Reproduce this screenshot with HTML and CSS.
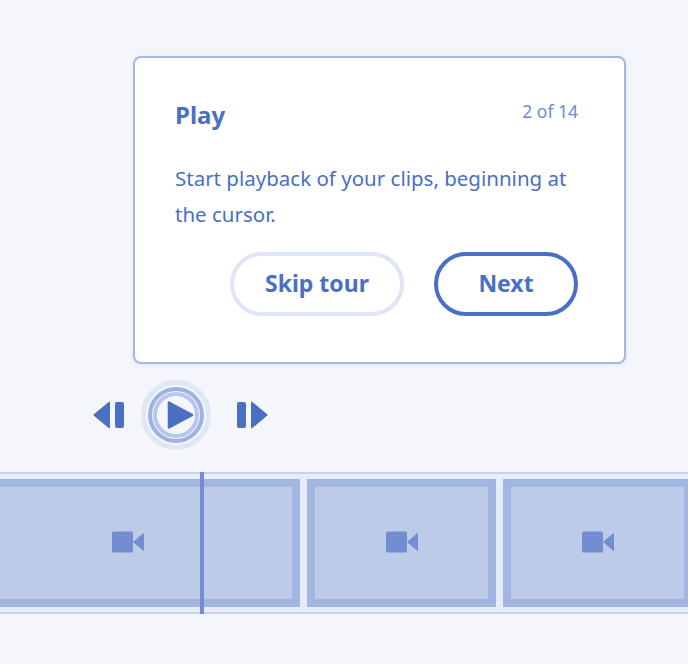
FILE: index.html
```html
<!DOCTYPE html>
<html lang="en">
<head>
    <meta charset="UTF-8">
    <title>Play tour</title>
    <link rel="stylesheet" href="styles.css">
</head>
<body>

    <div class="tour-card">
        <div class="tour-head">
            <h2>Play</h2>
            <span class="tour-count">2 of 14</span>
        </div>
        <p>Start playback of your clips, beginning at the cursor.</p>
        <div class="tour-actions">
            <button class="btn btn-skip">Skip tour</button>
            <button class="btn btn-next">Next</button>
        </div>
    </div>

    <div class="controls">
        <svg class="ctrl-step" width="31" height="28" viewBox="0 0 31 28">
            <path d="M17 1.500v25a.8.8 0 0 1-1.300.6L.6 14.600a.8.8 0 0 1 0-1.200L15.700.9a.8.8 0 0 1 1.300.6z"/>
            <rect x="22" y="1" width="9" height="26" rx="2"/>
        </svg>
        <svg class="ctrl-play" width="70" height="70" viewBox="0 0 70 70">
            <circle class="ring-outer" cx="35" cy="35" r="32.500"/>
            <circle class="ring-mid" cx="35" cy="35" r="26"/>
            <circle class="ring-inner" cx="35" cy="35" r="21"/>
            <path class="play-arrow" d="M26.700 22.500a1.200 1.200 0 0 1 1.800-1L51.800 34a1.200 1.200 0 0 1 0 2L28.500 48.500a1.200 1.200 0 0 1-1.800-1z"/>
        </svg>
        <svg class="ctrl-step" width="31" height="28" viewBox="0 0 31 28">
            <rect x="0" y="1" width="9" height="26" rx="2"/>
            <path d="M14 1.500v25a.8.8 0 0 0 1.300.6l15.100-12.500a.8.8 0 0 0 0-1.200L15.300.9a.8.8 0 0 0-1.300.6z"/>
        </svg>
    </div>

    <div class="timeline">
        <div class="clip clip-first">
            <svg class="clip-icon" width="32" height="22" viewBox="0 0 32 22"><rect width="21" height="21" y=".5" rx="1.500"/><path d="M21 11L31.200 2.200a.5.5 0 0 1 .8.400v16.800a.5.5 0 0 1-.8.400z"/></svg>
        </div>
        <div class="clip clip-mid">
            <svg class="clip-icon" width="32" height="22" viewBox="0 0 32 22"><rect width="21" height="21" y=".5" rx="1.500"/><path d="M21 11L31.200 2.200a.5.5 0 0 1 .8.400v16.800a.5.5 0 0 1-.8.400z"/></svg>
        </div>
        <div class="clip clip-last">
            <svg class="clip-icon" width="32" height="22" viewBox="0 0 32 22"><rect width="21" height="21" y=".5" rx="1.500"/><path d="M21 11L31.200 2.200a.5.5 0 0 1 .8.400v16.800a.5.5 0 0 1-.8.400z"/></svg>
        </div>
        <div class="playhead"></div>
    </div>

</body>
</html>
```

FILE: styles.css
```css
:root {
    --bg: #f4f6fc;
    --text: #4a6fc3;
    --muted: #6d8bd0;
    --line: #a5b8e4;
    --pale: #dfe6f6;
    --clip: #bdcbe9;
    --clip-border: #a3b6e1;
    --icon: #728dd1;
}

html, body {
    height: 100%;
}

body {
    font-family: 'Noto Sans', sans-serif;
    background: var(--bg);
    color: var(--text);
    margin: 0;
    padding-top: 56px;
    box-sizing: border-box;
    overflow: hidden;
}

.tour-card {
    width: 493px;
    height: 308px;
    box-sizing: border-box;
    margin-left: 133px;
    padding: 37px 46px 46px 40px;
    background: #fff;
    border: 2px solid var(--line);
    border-radius: 8px;
    box-shadow: 0 1px 4px rgba(74,111,195,0.12);
}

.tour-head {
    display: flex;
    justify-content: space-between;
    align-items: flex-start;
}

h2 {
    font-size: 24px;
    font-weight: 700;
    line-height: 40px;
    margin: 0;
}

.tour-count {
    font-size: 17.500px;
    line-height: 32px;
    color: var(--muted);
}

p {
    font-size: 20.500px;
    line-height: 36px;
    margin: 25px 0 0;
}

.tour-actions {
    display: flex;
    justify-content: flex-end;
    gap: 30px;
    margin-top: 20px;
}

.btn {
    height: 64px;
    padding: 0 0 3px;
    font-family: inherit;
    font-size: 23px;
    font-weight: 700;
    white-space: nowrap;
    color: var(--text);
    background: #fff;
    border: 4px solid var(--text);
    border-radius: 32px;
    cursor: pointer;
}

.btn-skip {
    width: 174px;
    border-color: var(--pale);
}

.btn-next {
    width: 144px;
}

.controls {
    display: flex;
    align-items: center;
    height: 70px;
    margin: 16px 0 0 93px;
}

.ctrl-step {
    fill: var(--text);
    display: block;
}

.ctrl-play {
    display: block;
    margin: 0 26px 0 17px;
    fill: none;
}

.ring-outer {
    stroke: var(--pale);
    stroke-width: 5;
}

.ring-mid {
    stroke: #9eb1e0;
    stroke-width: 4;
}

.ring-inner {
    stroke: #b7c6ea;
    stroke-width: 4;
}

.play-arrow {
    fill: var(--text);
}

.timeline {
    position: relative;
    display: flex;
    gap: 7px;
    height: 142px;
    box-sizing: border-box;
    margin-top: 22px;
    padding-top: 5px;
    background: #e6ecf8;
    border-top: 2px solid #c7d3ee;
    border-bottom: 2px solid #c7d3ee;
}

.clip {
    display: flex;
    align-items: center;
    justify-content: center;
    flex: none;
    height: 128px;
    box-sizing: border-box;
    background: var(--clip);
    border: 8px solid var(--clip-border);
}

.clip-first {
    width: 300px;
    border-left: none;
    justify-content: flex-start;
}

.clip-first .clip-icon {
    margin-left: 112px;
}

.clip-mid {
    width: 189px;
}

.clip-last {
    width: 189px;
}

.clip-icon {
    fill: var(--icon);
    display: block;
    margin-bottom: 2px;
}

.playhead {
    position: absolute;
    left: 200px;
    top: -2px;
    bottom: -2px;
    width: 4px;
    background: var(--icon);
}
```
